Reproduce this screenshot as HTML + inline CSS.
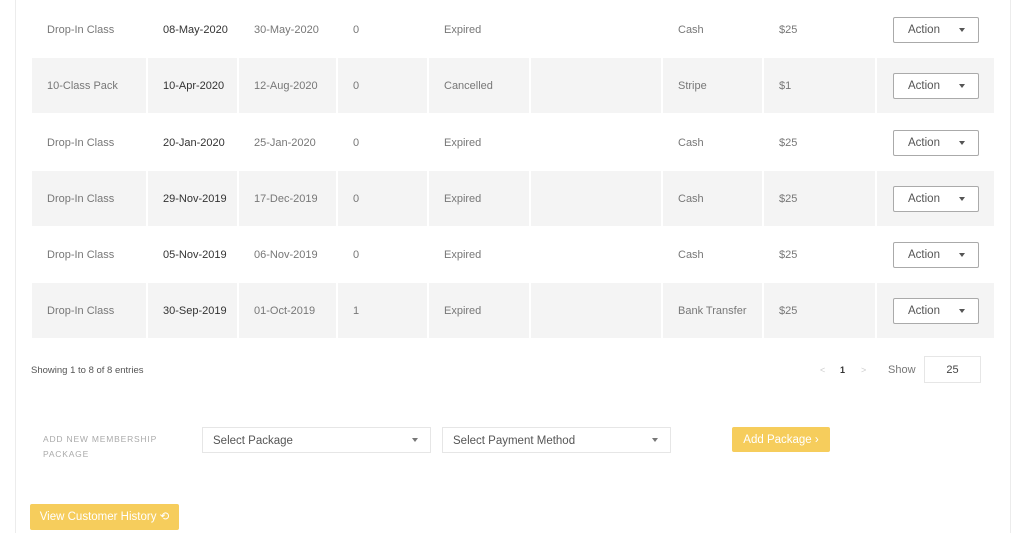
<!DOCTYPE html>
<html><head><style>
body{margin:0;width:1024px;height:533px;background:#fff;position:relative;overflow:hidden;font-family:"Liberation Sans",sans-serif;font-size:11px;color:#777}
.vl{position:absolute;top:0;bottom:0;width:1px;background:#ececec}
.row{position:absolute;left:32px;width:962px;height:55px}
.c{position:absolute;top:0;height:55px;line-height:57px;padding-left:15px;box-sizing:border-box}
.g .c{background:#f4f4f4}
.d{color:#333}
.btn{position:absolute;left:16px;top:15px;width:86px;height:26px;border:1px solid #aaa;border-radius:2px;background:#fff;box-sizing:border-box;line-height:24px;color:#555;font-size:11.5px;padding-left:14px}
.btn:after{content:"";position:absolute;right:13px;top:10px;border:3.5px solid transparent;border-top:4px solid #555}
.sel{position:absolute;height:26px;border:1px solid #e6e6e6;box-sizing:border-box;line-height:26px;padding-left:10px;color:#555;font-size:11.5px}
.sel:after{content:"";position:absolute;right:12px;top:10px;border:3.5px solid transparent;border-top:4px solid #777}
.yb{position:absolute;background:#f6cd5c;color:#fff;border-radius:2px;font-size:11.5px;text-align:center}
</style></head><body>
<div class="vl" style="left:15px"></div>
<div class="vl" style="left:1010px"></div>
<div class="row" style="top:2px"><div class="c" style="left:0;width:114px">Drop-In Class</div><div class="c d" style="left:116px;width:89px">08-May-2020</div><div class="c" style="left:207px;width:97px">30-May-2020</div><div class="c" style="left:306px;width:89px">0</div><div class="c" style="left:397px;width:100px">Expired</div><div class="c" style="left:499px;width:130px"></div><div class="c" style="left:631px;width:99px">Cash</div><div class="c" style="left:732px;width:111px">$25</div><div class="c" style="left:845px;width:117px"><div class="btn">Action</div></div></div>
<div class="row g" style="top:58px"><div class="c" style="left:0;width:114px">10-Class Pack</div><div class="c d" style="left:116px;width:89px">10-Apr-2020</div><div class="c" style="left:207px;width:97px">12-Aug-2020</div><div class="c" style="left:306px;width:89px">0</div><div class="c" style="left:397px;width:100px">Cancelled</div><div class="c" style="left:499px;width:130px"></div><div class="c" style="left:631px;width:99px">Stripe</div><div class="c" style="left:732px;width:111px">$1</div><div class="c" style="left:845px;width:117px"><div class="btn">Action</div></div></div>
<div class="row" style="top:115px"><div class="c" style="left:0;width:114px">Drop-In Class</div><div class="c d" style="left:116px;width:89px">20-Jan-2020</div><div class="c" style="left:207px;width:97px">25-Jan-2020</div><div class="c" style="left:306px;width:89px">0</div><div class="c" style="left:397px;width:100px">Expired</div><div class="c" style="left:499px;width:130px"></div><div class="c" style="left:631px;width:99px">Cash</div><div class="c" style="left:732px;width:111px">$25</div><div class="c" style="left:845px;width:117px"><div class="btn">Action</div></div></div>
<div class="row g" style="top:171px"><div class="c" style="left:0;width:114px">Drop-In Class</div><div class="c d" style="left:116px;width:89px">29-Nov-2019</div><div class="c" style="left:207px;width:97px">17-Dec-2019</div><div class="c" style="left:306px;width:89px">0</div><div class="c" style="left:397px;width:100px">Expired</div><div class="c" style="left:499px;width:130px"></div><div class="c" style="left:631px;width:99px">Cash</div><div class="c" style="left:732px;width:111px">$25</div><div class="c" style="left:845px;width:117px"><div class="btn">Action</div></div></div>
<div class="row" style="top:227px"><div class="c" style="left:0;width:114px">Drop-In Class</div><div class="c d" style="left:116px;width:89px">05-Nov-2019</div><div class="c" style="left:207px;width:97px">06-Nov-2019</div><div class="c" style="left:306px;width:89px">0</div><div class="c" style="left:397px;width:100px">Expired</div><div class="c" style="left:499px;width:130px"></div><div class="c" style="left:631px;width:99px">Cash</div><div class="c" style="left:732px;width:111px">$25</div><div class="c" style="left:845px;width:117px"><div class="btn">Action</div></div></div>
<div class="row g" style="top:283px"><div class="c" style="left:0;width:114px">Drop-In Class</div><div class="c d" style="left:116px;width:89px">30-Sep-2019</div><div class="c" style="left:207px;width:97px">01-Oct-2019</div><div class="c" style="left:306px;width:89px">1</div><div class="c" style="left:397px;width:100px">Expired</div><div class="c" style="left:499px;width:130px"></div><div class="c" style="left:631px;width:99px">Bank Transfer</div><div class="c" style="left:732px;width:111px">$25</div><div class="c" style="left:845px;width:117px"><div class="btn">Action</div></div></div>

<div style="position:absolute;left:31px;top:365px;font-size:9.5px;color:#555">Showing 1 to 8 of 8 entries</div>
<div style="position:absolute;left:820px;top:365px;font-size:9px;color:#ccc">&lt;</div>
<div style="position:absolute;left:840px;top:365px;font-size:9px;color:#333;font-weight:bold">1</div>
<div style="position:absolute;left:861px;top:365px;font-size:9px;color:#ccc">&gt;</div>
<div style="position:absolute;left:888px;top:364px;font-size:11px;color:#777">Show</div>
<div style="position:absolute;left:924px;top:356px;width:57px;height:27px;border:1px solid #e6e6e6;box-sizing:border-box;text-align:center;line-height:26px;color:#444">25</div>

<div style="position:absolute;left:43px;top:432px;font-size:8.5px;color:#aaa;letter-spacing:0.8px;line-height:15px">ADD NEW MEMBERSHIP<br>PACKAGE</div>
<div class="sel" style="left:202px;top:427px;width:229px">Select Package</div>
<div class="sel" style="left:442px;top:427px;width:229px">Select Payment Method</div>
<div class="yb" style="left:732px;top:427px;width:98px;height:25px;line-height:26px">Add Package &#x203A;</div>
<div class="yb" style="left:30px;top:504px;width:149px;height:26px;line-height:27px">View Customer History &#x27F2;</div>
</body></html>
